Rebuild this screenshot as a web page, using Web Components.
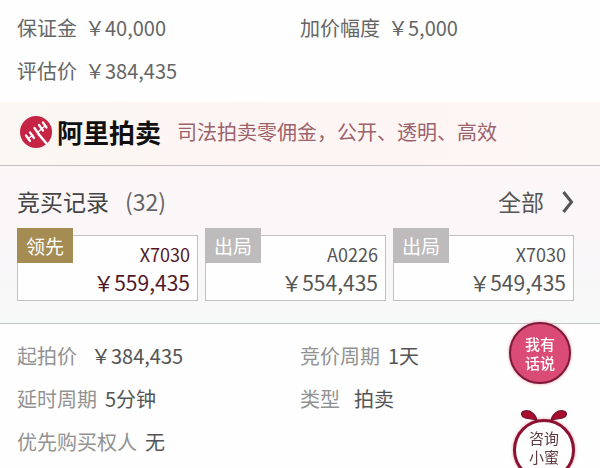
<!DOCTYPE html>
<html lang="zh-CN">
<head>
<meta charset="utf-8">
<meta name="viewport" content="width=device-width, initial-scale=1">
<title>阿里拍卖</title>
<style>
  body {
    margin: 0;
    background: #fdfefd;
    color: #555;
    font: 20px/43px "Noto Sans CJK SC", sans-serif;
  }
</style>
</head>
<body>
<auction-page>
  <info-grid>
    <info-item label="保证金">￥40,000</info-item>
    <info-item label="加价幅度">￥5,000</info-item>
    <info-item label="评估价">￥384,435</info-item>
  </info-grid>
  <brand-banner name="阿里拍卖">司法拍卖零佣金，公开、透明、高效</brand-banner>
  <bid-records title="竞买记录" count="32">
    <bid-card status="领先" user="X7030" leading>￥559,435</bid-card>
    <bid-card status="出局" user="A0226">￥554,435</bid-card>
    <bid-card status="出局" user="X7030">￥549,435</bid-card>
  </bid-records>
  <info-grid muted>
    <info-item label="起拍价" wide>￥384,435</info-item>
    <info-item label="竞价周期">1天</info-item>
    <info-item label="延时周期">5分钟</info-item>
    <info-item label="类型" wide>拍卖</info-item>
    <info-item label="优先购买权人">无</info-item>
  </info-grid>
  <float-dock slot="float">
    <round-button>我有<br>话说</round-button>
    <round-button bow>咨询<br>小蜜</round-button>
  </float-dock>
</auction-page>

<script>
(function () {
  'use strict';

  function render(el, html) {
    el.attachShadow({ mode: 'open' }).innerHTML = html;
  }

  class AuctionPage extends HTMLElement {
    connectedCallback() {
      render(this, `
        <style>
          :host { display: block; }
          main { display: flex; flex-direction: column; }
        </style>
        <main><slot></slot></main>
        <slot name="float"></slot>
      `);
    }
  }

  class InfoGrid extends HTMLElement {
    connectedCallback() {
      render(this, `
        <style>
          :host {
            display: grid;
            grid-template-columns: 1fr 1fr;
            padding: 6px 0 10px;
            --label: #666;
            --value: #666;
          }
          :host([muted]) {
            padding-top: 10px;
            --label: #929292;
            --value: #555;
          }
          ::slotted(:nth-child(odd)) { padding-left: 17px; }
        </style>
        <slot></slot>
      `);
    }
  }

  class InfoItem extends HTMLElement {
    connectedCallback() {
      render(this, `
        <style>
          :host { display: flex; gap: 8px; white-space: nowrap; }
          :host([wide]) { gap: 14px; }
          .label { color: var(--label); }
          .value { color: var(--value); }
        </style>
        <span class="label">${this.getAttribute('label')}</span>
        <span class="value"><slot></slot></span>
      `);
    }
  }

  class BrandBanner extends HTMLElement {
    connectedCallback() {
      render(this, `
        <style>
          :host {
            display: flex;
            align-items: center;
            padding: 14px 20px 17px;
            background: linear-gradient(90deg, #fbf7f2, #fdf5f4 40%, #fcf6f5);
            border-bottom: 1px solid #c5bfc0;
            line-height: 32px;
            white-space: nowrap;
          }
          svg { flex: none; width: 32px; height: 32px; }
          strong {
            margin: 0 16px 0 5px;
            color: #111;
            font-size: 26px;
            font-weight: 700;
            line-height: 28px;
          }
          span { color: #9c626b; }
        </style>
        <svg viewBox="0 0 32 32" aria-hidden="true">
          <circle cx="16" cy="16" r="16" fill="#c52445"/>
          <g fill="none" stroke="#fff" stroke-linecap="round">
            <path d="M6 19.500l4 5.500M10 16.500l4 5.500M14.500 12l4.500 6.500M19 9l4 5.500M23 6.500l3.500 5" stroke-width="2.200"/>
            <path d="M9 22L13 19M18 16L25 10" stroke-width="1.200"/>
            <path d="M18.500 18l8 9.500" stroke-width="2.500"/>
          </g>
        </svg>
        <strong>${this.getAttribute('name')}</strong>
        <span><slot></slot></span>
      `);
    }
  }

  class BidRecords extends HTMLElement {
    connectedCallback() {
      render(this, `
        <style>
          :host {
            display: block;
            padding: 18px 26px 22px 17px;
            background: linear-gradient(#fcf6f7, #faf7f9 50%, #f7f8f8);
            border-bottom: 1px solid #c4c4c6;
          }
          header {
            display: flex;
            align-items: center;
            gap: 16px;
            margin-bottom: 16px;
            font-size: 23px;
            line-height: 35px;
          }
          h2 { margin: 0; color: #444; font: inherit; }
          .count { color: #666; }
          a {
            display: flex;
            align-items: center;
            gap: 18px;
            margin-left: auto;
            color: #555;
            text-decoration: none;
          }
          .cards {
            display: grid;
            grid-template-columns: repeat(3, 1fr);
            gap: 7px;
          }
        </style>
        <header>
          <h2>${this.getAttribute('title')}</h2>
          <span class="count">(${this.getAttribute('count')})</span>
          <a href="#all">全部
            <svg width="12" height="24" viewBox="0 0 12 24" aria-hidden="true">
              <path d="M1.500 2l8 10-8 10" fill="none" stroke="#555" stroke-width="3"/>
            </svg>
          </a>
        </header>
        <div class="cards"><slot></slot></div>
      `);
    }
  }

  class BidCard extends HTMLElement {
    connectedCallback() {
      render(this, `
        <style>
          :host {
            position: relative;
            display: flex;
            flex-direction: column;
            align-items: flex-end;
            padding: 4px 7px;
            background: #fefefe;
            border: 1px solid #c0c0c2;
            color: #555;
            white-space: nowrap;
            --tag: #bdbbbc;
          }
          :host([leading]) { color: #54172a; --tag: #a58c52; }
          .tag {
            position: absolute;
            left: -1px;
            top: -8px;
            width: 56px;
            background: var(--tag);
            color: #fff;
            font-size: 19px;
            line-height: 35px;
            text-align: center;
          }
          .user, .price { line-height: 28px; }
          .user { font-size: 18px; }
          .price { font-size: 21px; }
        </style>
        <span class="tag">${this.getAttribute('status')}</span>
        <span class="user">${this.getAttribute('user')}</span>
        <span class="price"><slot></slot></span>
      `);
    }
  }

  // Stays over the lower right corner while the page scrolls
  class FloatDock extends HTMLElement {
    connectedCallback() {
      render(this, `
        <style>
          :host {
            position: fixed;
            right: 25px;
            bottom: -13px;
            display: flex;
            flex-direction: column;
            gap: 35px;
          }
        </style>
        <slot></slot>
      `);
    }
  }

  class RoundButton extends HTMLElement {
    connectedCallback() {
      const bow = this.hasAttribute('bow') ? `
        <svg viewBox="0 0 46 12" aria-hidden="true">
          <path d="M16 11C15 4 9 0 4 1c-5 1-4 6 1 7 4 1 7 0 11 3zM30 11C31 4 37 0 42 1c5 1 4 6-1 7-4 1-7 0-11 3z"
            fill="#a90f2c" stroke="#7d1230" stroke-width="1.500"/>
        </svg>` : '';

      render(this, `
        <style>
          :host { position: relative; display: block; margin-right: 4px; }
          :host([bow]) { margin: 0 0 0 4px; }
          button {
            display: block;
            width: 62px;
            height: 62px;
            padding: 0;
            border: 2px solid #7d1a3a;
            border-radius: 50%;
            background: #da4c75;
            box-shadow: 0 0 3px #e88a9e;
            color: #fff;
            font: 500 15px/19px "Noto Sans CJK SC", sans-serif;
          }
          :host([bow]) button {
            padding-bottom: 6px;
            border-width: 3px;
            border-color: #8c1232;
            background: #fefefe;
            color: #5b3a42;
            font-weight: 400;
          }
          svg {
            position: absolute;
            left: 8px;
            top: -9px;
            width: 46px;
            height: 12px;
          }
        </style>
        <button type="button"><slot></slot></button>
        ${bow}
      `);
    }
  }

  customElements.define('auction-page', AuctionPage);
  customElements.define('info-grid', InfoGrid);
  customElements.define('info-item', InfoItem);
  customElements.define('brand-banner', BrandBanner);
  customElements.define('bid-records', BidRecords);
  customElements.define('bid-card', BidCard);
  customElements.define('float-dock', FloatDock);
  customElements.define('round-button', RoundButton);
})();
</script>
</body>
</html>
